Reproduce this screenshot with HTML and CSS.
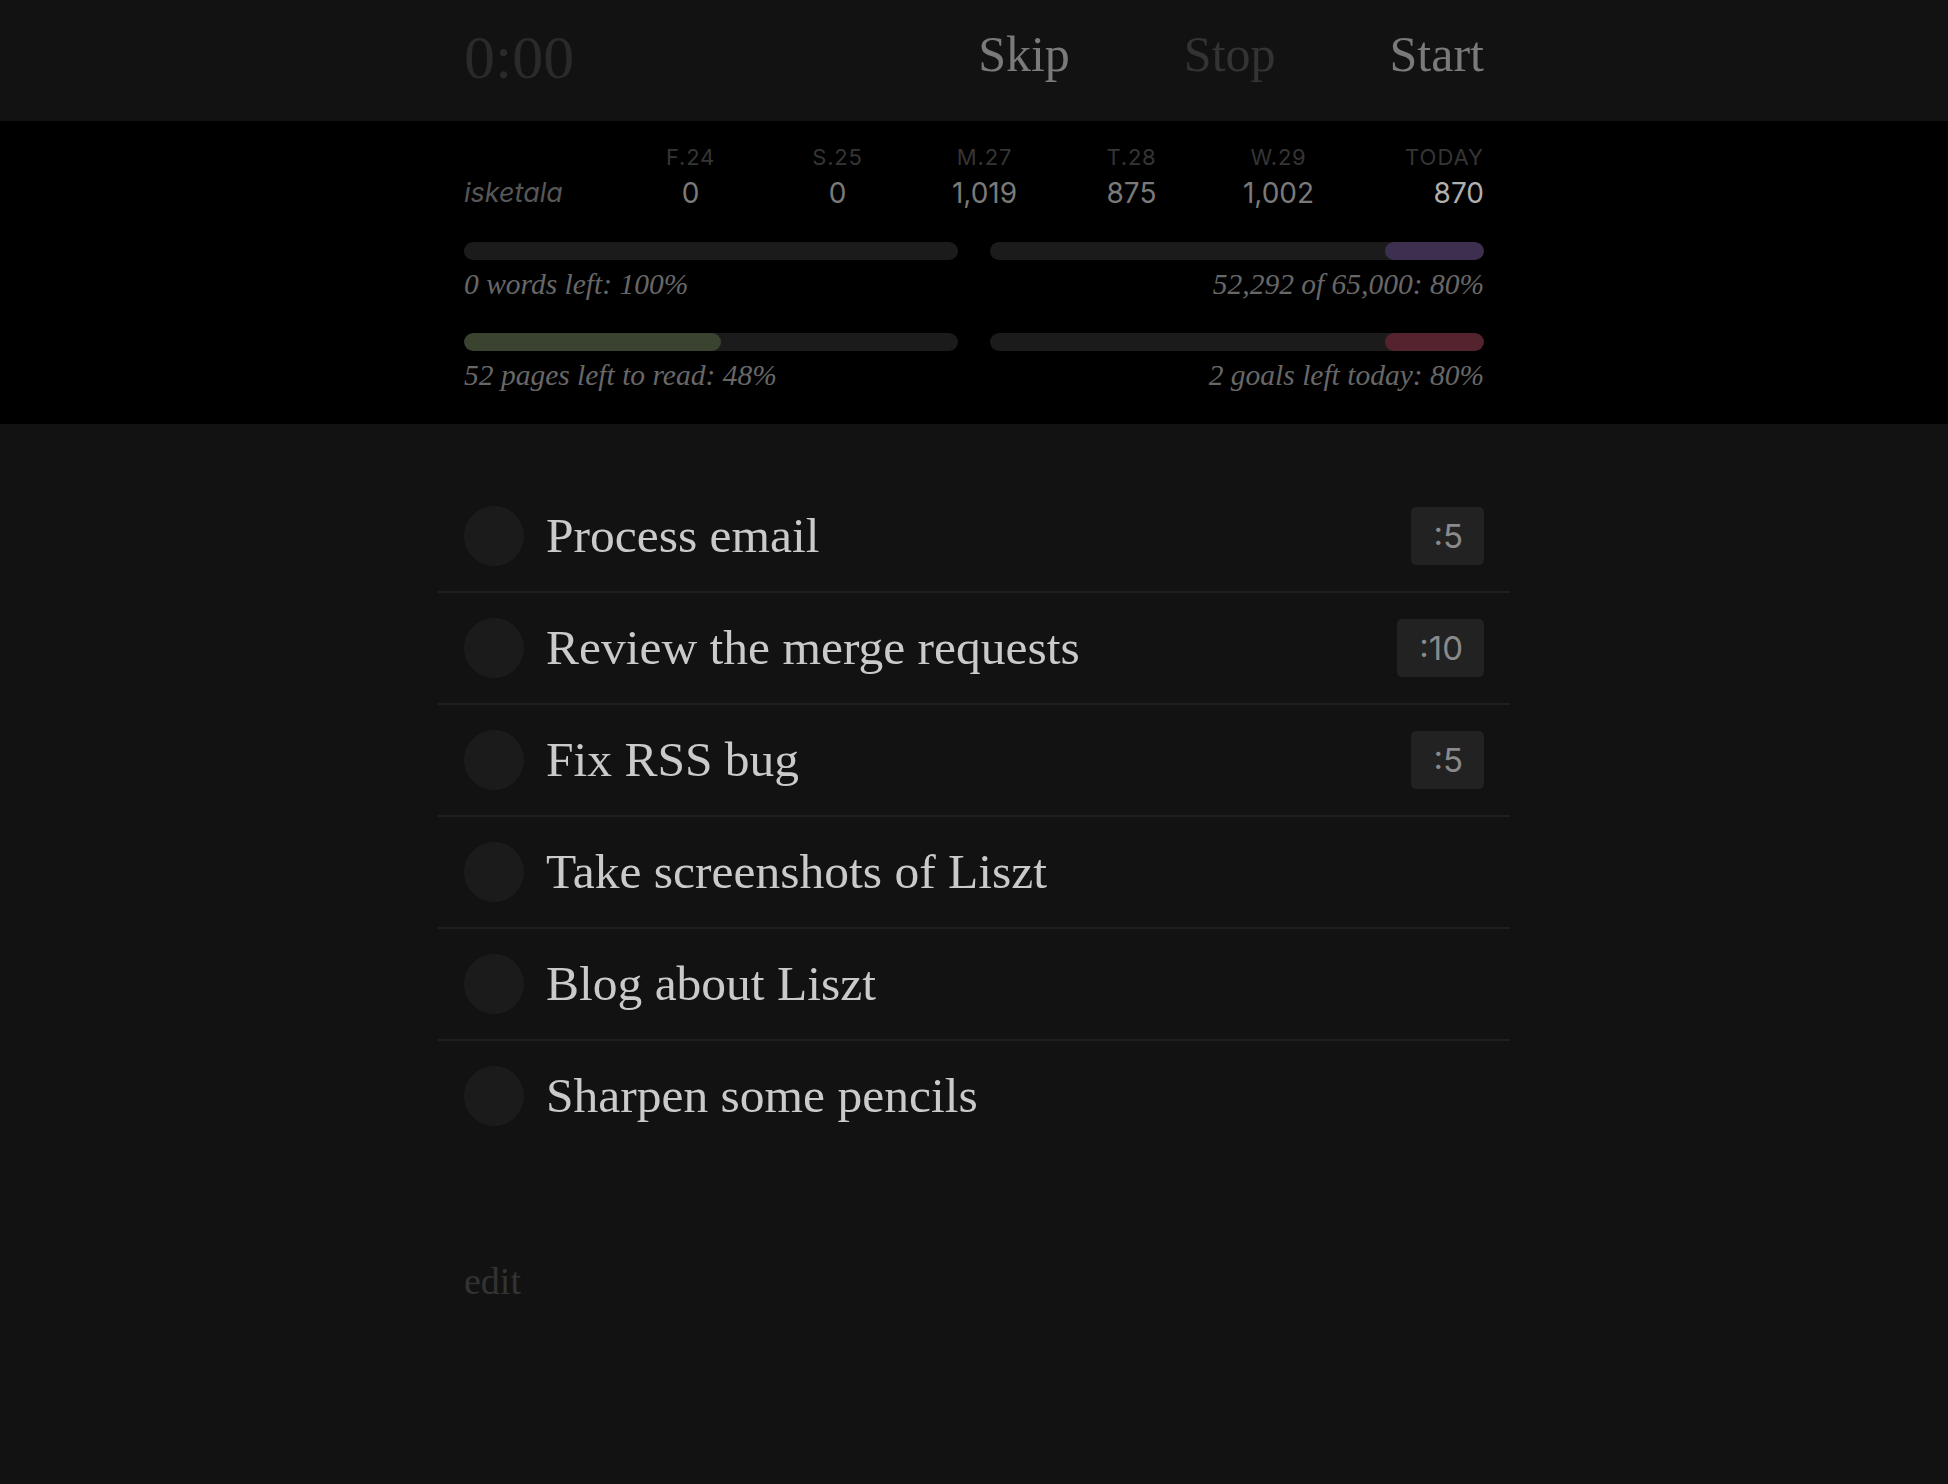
FILE: index.html
```html
<!DOCTYPE html>
<html lang="en">
<head>
<meta charset="utf-8">
<title>Liszt</title>
<link rel="stylesheet" href="styles.css">
</head>
<body>
<header class="topbar">
  <div class="wrap topbar-inner">
    <span class="timer">0:00</span>
    <nav class="controls">
      <button class="ctl">Skip</button>
      <button class="ctl ctl-off">Stop</button>
      <button class="ctl">Start</button>
    </nav>
  </div>
</header>

<section class="stats">
  <div class="wrap">
    <div class="days">
      <span></span>
      <span class="day">F.24</span>
      <span class="day">S.25</span>
      <span class="day">M.27</span>
      <span class="day">T.28</span>
      <span class="day">W.29</span>
      <span class="day day-today">TODAY</span>
      <span class="who">isketala</span>
      <span class="count">0</span>
      <span class="count">0</span>
      <span class="count">1,019</span>
      <span class="count">875</span>
      <span class="count">1,002</span>
      <span class="count count-today">870</span>
    </div>
    <div class="goals">
      <div class="goal">
        <div class="track"></div>
        <p class="caption">0 words left: 100%</p>
      </div>
      <div class="goal goal-right">
        <div class="track track-right"><div class="fill fill-purple" style="width:20%"></div></div>
        <p class="caption">52,292 of 65,000: 80%</p>
      </div>
      <div class="goal">
        <div class="track"><div class="fill fill-green" style="width:52%"></div></div>
        <p class="caption">52 pages left to read: 48%</p>
      </div>
      <div class="goal goal-right">
        <div class="track track-right"><div class="fill fill-red" style="width:20%"></div></div>
        <p class="caption">2 goals left today: 80%</p>
      </div>
    </div>
  </div>
</section>

<main class="wrap content">
  <ul class="tasks">
    <li class="task"><span class="check"></span><span class="title">Process email</span><span class="est">:5</span></li>
    <li class="task"><span class="check"></span><span class="title">Review the merge requests</span><span class="est">:10</span></li>
    <li class="task"><span class="check"></span><span class="title">Fix RSS bug</span><span class="est">:5</span></li>
    <li class="task"><span class="check"></span><span class="title">Take screenshots of Liszt</span></li>
    <li class="task"><span class="check"></span><span class="title">Blog about Liszt</span></li>
    <li class="task"><span class="check"></span><span class="title">Sharpen some pencils</span></li>
  </ul>
  <a class="edit">edit</a>
</main>
</body>
</html>
```

FILE: styles.css
```css
* { box-sizing: border-box; }

html, body {
  margin: 0;
  padding: 0;
  background: #121212;
  font-family: "Liberation Serif", "Times New Roman", serif;
}

.wrap {
  width: 1020px;
  margin: 0 auto;
}

/* top bar */
.topbar {
  height: 121px;
  background: #121212;
}
.topbar-inner {
  display: flex;
  justify-content: space-between;
  align-items: flex-start;
}
.timer {
  margin-top: 26px;
  font-size: 62px;
  line-height: 1;
  color: #2a2a2a;
}
.controls {
  display: flex;
  gap: 114px;
  margin-top: 29px;
}
.ctl {
  background: none;
  border: 0;
  padding: 0;
  font-family: inherit;
  font-size: 50px;
  line-height: 1;
  color: #7a7a7a;
}
.ctl-off { color: #333333; }

/* stats */
.stats {
  background: #000;
  padding: 24px 0 33px;
}
.days {
  display: grid;
  grid-template-columns: 153px repeat(5, 147px) 1fr;
  row-gap: 8px;
  font-family: "Inter", "Roboto", sans-serif;
}
.day {
  font-size: 22px;
  line-height: 24px;
  letter-spacing: 0.8px;
  color: #353535;
  text-align: center;
}
.day-today { text-align: right; letter-spacing: 1px; }
.who {
  font-size: 27px;
  line-height: 32px;
  font-style: italic;
  color: #575757;
}
.count {
  font-size: 28px;
  line-height: 32px;
  color: #7a7a7a;
  text-align: center;
}
.count-today {
  text-align: right;
  color: #b0b0b0;
}

.goals {
  margin-top: 33px;
  display: grid;
  grid-template-columns: 1fr 1fr;
  column-gap: 32px;
  row-gap: 33px;
}
.track {
  height: 18px;
  border-radius: 9px;
  background: #1b1b1b;
  overflow: hidden;
  display: flex;
}
.track-right { justify-content: flex-end; }
.fill {
  height: 100%;
  border-radius: 9px;
}
.fill-purple { background: #3d2f50; }
.fill-green { background: #394330; }
.fill-red { background: #55232e; }
.caption {
  margin: 8px 0 0;
  font-size: 29.5px;
  line-height: 32px;
  font-style: italic;
  color: #676767;
}
.goal-right .caption { text-align: right; }

/* tasks */
.content {
  padding-top: 57px;
}
.tasks {
  list-style: none;
  margin: 0 -26px;
  padding: 0;
}
.task {
  display: flex;
  align-items: center;
  padding: 25px 26px;
  border-bottom: 2px solid #1f1f1f;
}
.task:last-child { border-bottom: 0; }
.check {
  flex: none;
  width: 60px;
  height: 60px;
  border-radius: 50%;
  background: #1b1b1b;
  margin-right: 22px;
}
.title {
  flex: 1;
  font-size: 49.5px;
  line-height: 54px;
  color: #cacaca;
}
.est {
  flex: none;
  height: 58px;
  padding: 0 21px 0 22px;
  border-radius: 5px;
  background: #222222;
  font-family: "Inter", "Roboto", sans-serif;
  font-size: 33px;
  line-height: 58px;
  color: #8a8a8a;
}

.edit {
  display: inline-block;
  margin-top: 110px;
  font-size: 38px;
  line-height: 40px;
  color: #333333;
}
```
